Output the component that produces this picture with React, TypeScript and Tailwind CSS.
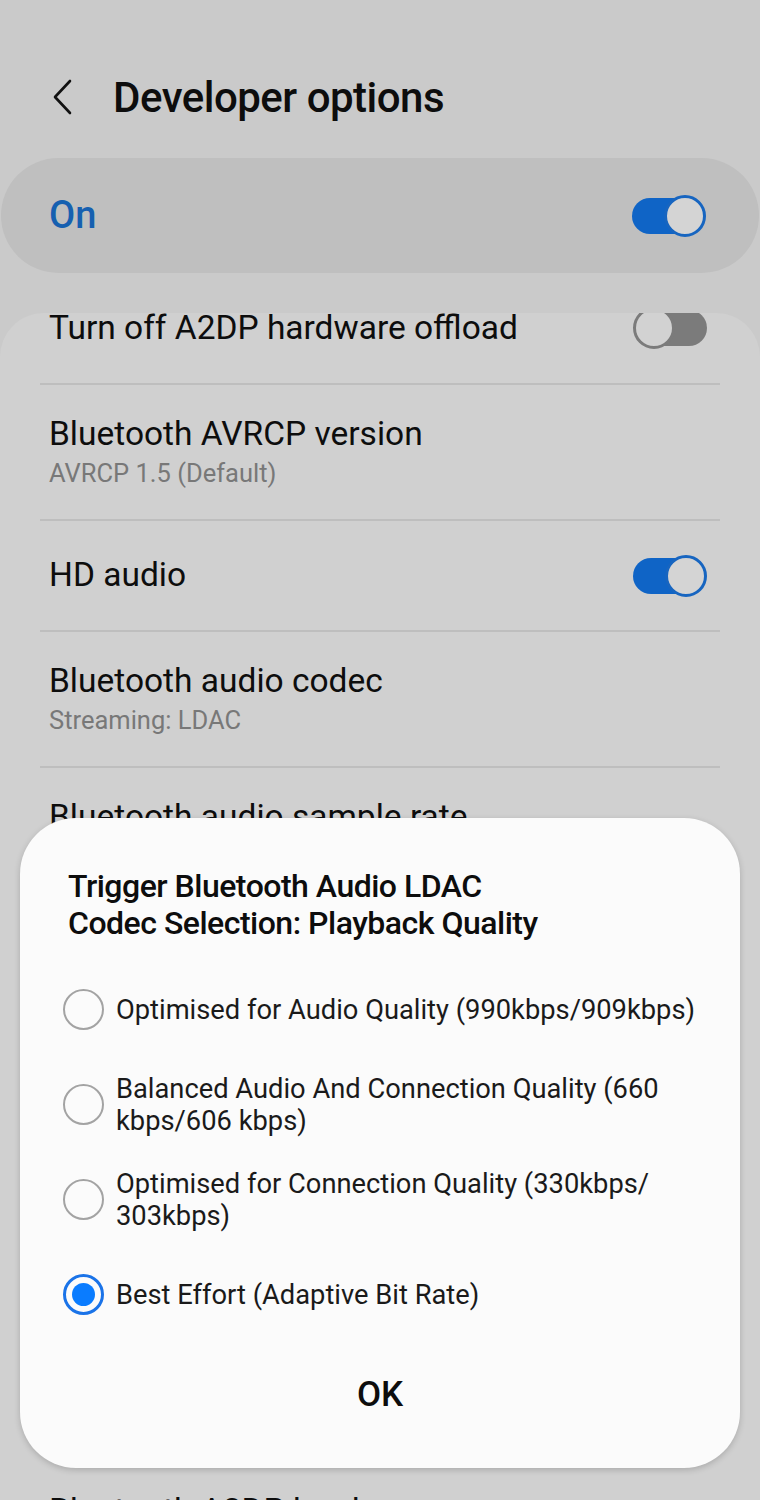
import React from "react"

const Toggle: React.FC<{ on: boolean }> = ({ on }) => {
    if (on) {
        return (
            <div className="relative w-[74px] h-[42px] shrink-0">
                <div className="absolute left-0 top-[3px] w-[60px] h-[36px] rounded-full bg-[#0f64c6]" />
                <div className="absolute right-0 top-0 w-[42px] h-[42px] rounded-full bg-[#d4d4d4] border-[3px] border-[#1765c0]" />
            </div>
        )
    }
    return (
        <div className="relative w-[74px] h-[42px] shrink-0">
            <div className="absolute right-0 top-[3px] w-[60px] h-[36px] rounded-full bg-[#7b7b7b]" />
            <div className="absolute left-0 top-0 w-[42px] h-[42px] rounded-full bg-[#d2d2d2] border-[3px] border-[#7b7b7b]" />
        </div>
    )
}

const Radio: React.FC<{ checked?: boolean }> = ({ checked }) => {
    if (checked) {
        return (
            <div className="w-[41px] h-[41px] rounded-full border-[3px] border-[#1a73e8] flex items-center justify-center shrink-0">
                <div className="w-[23px] h-[23px] rounded-full bg-[#0a7cff]" />
            </div>
        )
    }
    return <div className="w-[41px] h-[41px] rounded-full border-2 border-[#a3a3a3] shrink-0" />
}

const Divider = () => <div className="mx-[40px] h-[2px] bg-[#bebebe]" />

const TwoLine: React.FC<{ title: string; sub: string }> = ({ title, sub }) => (
    <div className="h-[134px] flex flex-col justify-center pl-[49px] pt-[2px]">
        <span className="text-[33.5px] leading-[40px]">{title}</span>
        <span className="text-[25.5px] leading-[38px] text-[#787878]">{sub}</span>
    </div>
)

const options = [
    { label: "Optimised for Audio Quality (990kbps/909kbps)" },
    { label: "Balanced Audio And Connection Quality (660 kbps/606 kbps)" },
    { label: "Optimised for Connection Quality (330kbps/ 303kbps)" },
    { label: "Best Effort (Adaptive Bit Rate)", checked: true },
]

const App: React.FC = () => {
    return (
        <div
            className="relative w-[760px] h-[1500px] overflow-hidden bg-[#cacaca] text-[#0d0d0d]"
            style={{ fontFamily: "Roboto, 'Noto Sans', sans-serif" }}
        >
            {/* header */}
            <div className="h-[158px] flex items-center pl-[48px] pt-[36px]">
                <svg width="30" height="40" viewBox="0 0 30 40" className="mr-[35px]">
                    <path d="M22 4 L7 20 L22 36" fill="none" stroke="#111" strokeWidth="2.6" strokeLinecap="round" strokeLinejoin="round" />
                </svg>
                <h1 className="text-[42px] font-medium tracking-[-0.5px]">Developer options</h1>
            </div>

            {/* master switch */}
            <div className="mx-[1px] h-[115px] rounded-full bg-[#bfbfbf] flex items-center justify-between pl-[48px] pr-[53px]">
                <span className="text-[38px] text-[#1660b0] font-medium">On</span>
                <Toggle on />
            </div>

            {/* settings list */}
            <div className="mt-[40px] h-[1200px] rounded-t-[44px] bg-[#d0d0d0] overflow-hidden">
                <div className="-mt-[41px]">
                    <div className="h-[111px] flex items-center justify-between pl-[49px] pr-[53px]">
                        <span className="text-[33.5px] leading-[28px]">Turn off A2DP hardware offload</span>
                        <Toggle on={false} />
                    </div>
                    <Divider />
                    <TwoLine title="Bluetooth AVRCP version" sub="AVRCP 1.5 (Default)" />
                    <Divider />
                    <div className="h-[109px] flex items-center justify-between pl-[49px] pr-[53px]">
                        <span className="text-[33.5px]">HD audio</span>
                        <Toggle on />
                    </div>
                    <Divider />
                    <TwoLine title="Bluetooth audio codec" sub="Streaming: LDAC" />
                    <Divider />
                    <TwoLine title="Bluetooth audio sample rate" sub="Streaming: 96.0 kHz" />
                    <Divider />
                    <TwoLine title="Bluetooth audio bits per sample" sub="Streaming: 24 bits/sample" />
                    <Divider />
                    <TwoLine title="Bluetooth audio channel mode" sub="Streaming: Stereo" />
                    <Divider />
                    <TwoLine title="Bluetooth audio LDAC codec" sub="Best Effort (Adaptive Bit Rate)" />
                    <Divider />
                    <TwoLine title="Maximum connected Bluetooth audio devices" sub="Use system default: 2" />
                    <Divider />
                    <div className="pt-[43px] pl-[49px]">
                        <span className="text-[33.5px] leading-[40px]">Bluetooth A2DP hardware</span>
                    </div>
                </div>
            </div>

            {/* dialog */}
            <div className="absolute left-[20px] top-[818px] w-[720px] h-[650px] rounded-[56px] bg-[#fbfbfb] shadow-[0_2px_6px_rgba(0,0,0,0.18)] flex flex-col">
                <h2 className="pt-[50px] pl-[48px] pr-[30px] text-[32px] leading-[37px] font-medium tracking-[-0.5px]">
                    Trigger Bluetooth Audio LDAC<br />Codec Selection: Playback Quality
                </h2>
                <div className="mt-[20px] flex flex-col">
                    {options.map((o) => (
                        <div key={o.label} className="flex items-center pl-[43px] pr-[36px] h-[95px]">
                            <Radio checked={o.checked} />
                            <span className="ml-[12px] text-[27.3px] leading-[32px] text-[#1a1a1a]">{o.label}</span>
                        </div>
                    ))}
                </div>
                <div className="mt-[33px] text-center text-[35px] leading-[40px] font-medium">OK</div>
            </div>
        </div>
    )
}

export default App
